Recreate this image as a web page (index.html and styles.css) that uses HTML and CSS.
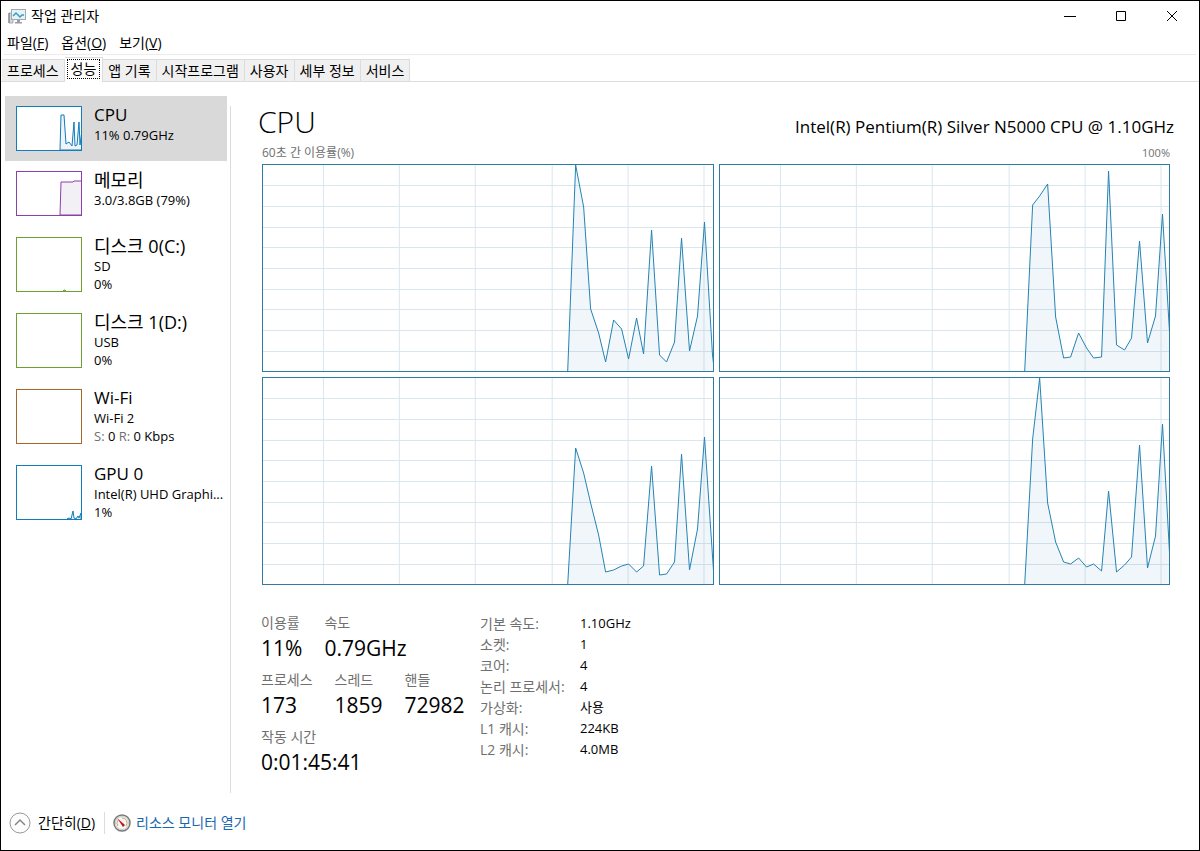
FILE: index.html
```html
<!DOCTYPE html>
<html lang="ko">
<head>
  <title>작업 관리자</title>
  <meta charset="utf-8">
  <meta name="viewport" content="width=device-width, initial-scale=1">
  <link rel="stylesheet" href="styles.css">
</head>
<body>
  <div class="window">
    <header class="titlebar">
      <svg class="app-icon" viewBox="0 0 18 16">
        <path d="M1 5h4v10H1z" fill="#d5d8da" stroke="#a9aeb1" />
        <path d="M1 5v10" stroke="#6c7276" />
        <rect x="3.500" y="1.500" width="14" height="10" fill="#e4f3fa" stroke="#a2a8ac" />
        <path d="M5 8l3-3 4 4 2-2h2" fill="none" stroke="#3d9ac4" stroke-width="1.500" />
        <path d="M9 12h3v2h2v1.500H7V14h2z" fill="#999fa3" />
      </svg>
      <h1 class="title">작업 관리자</h1>
      <div class="window-controls">
        <button class="control" aria-label="최소화"><svg viewBox="0 0 12 12"><path d="M0 6.500h12" /></svg></button>
        <button class="control" aria-label="최대화"><svg viewBox="0 0 12 12"><path d="M1.500 1.500h9v9h-9z" /></svg></button>
        <button class="control" aria-label="닫기"><svg viewBox="0 0 12 12"><path d="M1 1l10 10M11 1L1 11" /></svg></button>
      </div>
    </header>

    <nav class="menubar">
      <button class="menu">파일(<u>F</u>)</button>
      <button class="menu">옵션(<u>O</u>)</button>
      <button class="menu">보기(<u>V</u>)</button>
    </nav>

    <div class="tabs" role="tablist">
      <button class="tab" role="tab">프로세스</button>
      <button class="tab tab-active" role="tab" aria-selected="true"><span>성능</span></button>
      <button class="tab" role="tab">앱 기록</button>
      <button class="tab" role="tab">시작프로그램</button>
      <button class="tab" role="tab">사용자</button>
      <button class="tab" role="tab">세부 정보</button>
      <button class="tab" role="tab">서비스</button>
    </div>

    <div class="content">
      <aside class="sidebar">
        <button class="resource resource-active">
          <svg class="thumb thumb-short cpu" viewBox="0 0 64 43">
            <path class="area" d="M43 43L44 8h3l2 29 3-2 3 4 2-24 1 24 2-1 2-23 1 23 2-15 1-11v31z" />
          </svg>
          <span class="resource-text">
            <span class="resource-name" lang="en">CPU</span>
            <span class="resource-info">11% 0.79GHz</span>
          </span>
        </button>
        <button class="resource">
          <svg class="thumb thumb-short memory" viewBox="0 0 64 43">
            <path class="area" d="M43 43l1-33h12l1-1h8v34z" />
          </svg>
          <span class="resource-text">
            <span class="resource-name">메모리</span>
            <span class="resource-info">3.0/3.8GB (79%)</span>
          </span>
        </button>
        <button class="resource">
          <svg class="thumb disk" viewBox="0 0 64 53">
            <path class="area" d="M46 53l1-1h1l1 1z" />
          </svg>
          <span class="resource-text">
            <span class="resource-name">디스크 0(C:)</span>
            <span class="resource-info">SD</span>
            <span class="resource-info">0%</span>
          </span>
        </button>
        <button class="resource">
          <svg class="thumb disk" viewBox="0 0 64 53"></svg>
          <span class="resource-text">
            <span class="resource-name">디스크 1(D:)</span>
            <span class="resource-info">USB</span>
            <span class="resource-info">0%</span>
          </span>
        </button>
        <button class="resource">
          <svg class="thumb network" viewBox="0 0 64 53"></svg>
          <span class="resource-text">
            <span class="resource-name" lang="en">Wi-Fi</span>
            <span class="resource-info">Wi-Fi 2</span>
            <span class="resource-info"><span class="muted">S:</span> 0 <span class="muted">R:</span> 0 Kbps</span>
          </span>
        </button>
        <button class="resource">
          <svg class="thumb gpu" viewBox="0 0 64 53">
            <path class="area" d="M50 53l2-1 2 1 2-8 1 7 2 1 2-3 1 2 2-5v8z" />
          </svg>
          <span class="resource-text">
            <span class="resource-name" lang="en">GPU 0</span>
            <span class="resource-info">Intel(R) UHD Graphi...</span>
            <span class="resource-info">1%</span>
          </span>
        </button>
      </aside>

      <main class="detail">
        <div class="detail-header">
          <h2 class="detail-title">CPU</h2>
          <span class="detail-model">Intel(R) Pentium(R) Silver N5000 CPU @ 1.10GHz</span>
        </div>

        <div class="chart-labels">
          <span>60초 간 이용률(%)</span>
          <span class="chart-max">100%</span>
        </div>

        <div class="charts">
          <svg class="chart" viewBox="0 0 450 206" preserveAspectRatio="none">
            <path id="grid" class="grid" d="M60.500 0v206M136.500 0v206M212.500 0v206M289.500 0v206M365.500 0v206M441.500 0v206M0 20.500h450M0 41.500h450M0 62.500h450M0 82.500h450M0 103.500h450M0 124.500h450M0 144.500h450M0 165.500h450M0 186.500h450" />
            <polygon class="area" points="305,207 313,0 321,42 328,144 336,168 343,197 351,155 359,164 366,194 374,153 381,189 389,65 397,190 404,197 412,177 419,73 427,186 435,151 442,57 450,190 452,207" />
          </svg>
          <svg class="chart" viewBox="0 0 450 206" preserveAspectRatio="none">
            <use href="#grid" />
            <polygon class="area" points="305,207 313,40 320,31 328,19 336,152 344,193 351,192 359,168 367,183 374,193 382,192 389,6 397,180 405,185 412,173 420,76 428,178 436,151 443,49 450,167 452,207" />
          </svg>
          <svg class="chart" viewBox="0 0 450 206" preserveAspectRatio="none">
            <use href="#grid" />
            <polygon class="area" points="305,207 313,70 321,95 328,125 336,157 343,194 351,192 359,188 366,186 374,194 381,188 389,88 397,197 404,196 412,184 419,76 427,192 435,151 442,59 450,178 452,207" />
          </svg>
          <svg class="chart" viewBox="0 0 450 206" preserveAspectRatio="none">
            <use href="#grid" />
            <polygon class="area" points="305,207 313,61 320,0 328,125 336,164 344,184 351,186 359,180 367,189 374,186 382,193 389,113 397,194 405,187 412,179 420,67 428,190 436,158 443,46 450,175 452,207" />
          </svg>
        </div>

        <div class="stats">
          <div class="stats-live">
            <dl class="stat-row">
              <div><dt>이용률</dt><dd>11%</dd></div>
              <div><dt>속도</dt><dd>0.79GHz</dd></div>
            </dl>
            <dl class="stat-row">
              <div><dt>프로세스</dt><dd>173</dd></div>
              <div><dt>스레드</dt><dd>1859</dd></div>
              <div><dt>핸들</dt><dd>72982</dd></div>
            </dl>
            <dl class="stat-row">
              <div><dt>작동 시간</dt><dd>0:01:45:41</dd></div>
            </dl>
          </div>
          <table class="specs">
            <tr><th scope="row">기본 속도:</th><td>1.10GHz</td></tr>
            <tr><th scope="row">소켓:</th><td>1</td></tr>
            <tr><th scope="row">코어:</th><td>4</td></tr>
            <tr><th scope="row">논리 프로세서:</th><td>4</td></tr>
            <tr><th scope="row">가상화:</th><td>사용</td></tr>
            <tr><th scope="row">L1 캐시:</th><td>224KB</td></tr>
            <tr><th scope="row">L2 캐시:</th><td>4.0MB</td></tr>
          </table>
        </div>
      </main>
    </div>

    <footer class="footer">
      <button class="fewer-btn">
        <svg class="chevron" viewBox="0 0 22 22">
          <circle cx="11" cy="11" r="10" fill="#fdfdfd" stroke="#999" />
          <path d="M6 13l5-5 5 5" fill="none" stroke="#888" stroke-width="1.500" />
        </svg>
        <span>간단히(<u>D</u>)</span>
      </button>
      <a class="monitor-link" href="#">
        <svg class="gauge" viewBox="0 0 18 18">
          <circle cx="9" cy="9" r="8" fill="#f7f7f5" stroke="#77797a" stroke-width="1.500" />
          <circle cx="9" cy="9" r="6.500" fill="none" stroke="#c9c9c5" />
          <path d="M5 12a5 5 0 0 1 0-6M9 4a5 5 0 0 1 4 8" fill="none" stroke="#c9a87c" />
          <path d="M4 4l8 7-2 2z" fill="#c01818" />
        </svg>
        <span>리소스 모니터 열기</span>
      </a>
    </footer>
  </div>
</body>
</html>
```
FILE: styles.css
```css
* {
  box-sizing: border-box;
}

body {
  margin: 0;
  font-family: "Open Sans", "Noto Sans CJK KR", sans-serif;
  font-size: 14px;
  line-height: 18px;
  color: #000;
  background-color: #fff;
}

button {
  padding: 0;
  border: none;
  background: none;
  font: inherit;
  color: inherit;
}

svg {
  display: block;
}

.window {
  display: flex;
  flex-direction: column;
  min-height: 100vh;
  border: 1px solid #000;
}

/* Title bar */
.titlebar {
  display: flex;
  align-items: center;
  height: 30px;
  padding: 0 2px 0 7px;
}

.app-icon {
  width: 18px;
  height: 16px;
  margin-right: 5px;
}

.title {
  margin: 0;
  font-size: 14px;
  font-weight: 400;
}

.window-controls {
  display: flex;
  margin-left: auto;
}

.control {
  display: flex;
  align-items: center;
  justify-content: center;
  width: 51px;
  height: 30px;
}

.control svg {
  width: 12px;
  height: 12px;
  fill: none;
  stroke: #000;
}

/* Menu and tabs */
.menubar {
  display: flex;
  gap: 13px;
  height: 24px;
  margin: 0 3px;
  padding-left: 3px;
  border-bottom: 1px solid #ececec;
}

.tabs {
  display: flex;
  align-items: flex-end;
  height: 27px;
  padding-left: 1px;
  border-bottom: 1px solid #dcdcdc;
}

.tab {
  height: 22px;
  padding: 0 5px;
  border: 1px solid #dcdcdc;
  border-bottom: none;
  border-left: none;
  background-color: #f0f0f0;
}

.tab-active {
  height: 25px;
  margin-bottom: -1px;
  padding: 0 2px 2px;
  background-color: #fff;
}

.tab-active span {
  display: block;
  padding: 0 3px;
  border: 1px dotted #000;
}

/* Resource list */
.content {
  display: flex;
  flex: 1;
  padding-top: 14px;
}

.sidebar {
  display: flex;
  flex-direction: column;
  width: 222px;
  margin-left: 4px;
}

.resource {
  display: flex;
  gap: 12px;
  padding: 10px 0 11px 11px;
  text-align: left;
}

.resource-active {
  padding-bottom: 10px;
  background-color: #d9d9d9;
}

.thumb {
  flex: none;
  width: 66px;
  height: 55px;
  border: 1px solid;
  background-color: #fff;
}

.thumb-short {
  height: 45px;
}

.cpu,
.gpu {
  color: #117dbb;
}

.memory {
  color: #8b3fa8;
}

.disk {
  color: #6fa02f;
}

.network {
  color: #a8672a;
}

.thumb .area {
  fill: #f1f3f8;
  stroke: currentColor;
}

.memory .area {
  fill: #f3f0f5;
}

.resource-text {
  display: flex;
  flex-direction: column;
  height: 45px;
}

.resource-name {
  margin-bottom: 2px;
  font-size: 18px;
  line-height: 18px;
}

.resource-name:lang(en) {
  font-size: 17px;
}

.resource-info {
  font-size: 13px;
  line-height: 18px;
  white-space: nowrap;
}

.muted {
  color: #707070;
}

/* Detail pane */
.detail {
  flex: 1;
  min-width: 0;
  margin: 10px 0 3px 3px;
  padding: 0 29px 0 31px;
  border-left: 1px solid #dcdcdc;
}

.detail-header {
  display: flex;
  align-items: baseline;
  justify-content: space-between;
  margin: 0 -4px;
}

.detail-title {
  margin: 0;
  font-size: 30px;
  font-weight: 300;
  line-height: 32px;
}

.detail-model {
  font-size: 17px;
}

.chart-labels {
  display: flex;
  justify-content: space-between;
  padding: 6px 0 2px;
  font-size: 12px;
  color: #707070;
}

.chart-max {
  font-size: 11px;
}

.charts {
  display: grid;
  grid-template-columns: 1fr 1fr;
  gap: 5px;
}

.chart {
  width: 100%;
  height: 208px;
  border: 1px solid #2f7ca3;
}

.grid {
  fill: none;
  stroke: #d9e6ee;
  shape-rendering: crispEdges;
}

.chart .area {
  fill: rgba(17, 105, 170, 0.06);
  stroke: #2583b3;
  vector-effect: non-scaling-stroke;
}

.stats {
  display: flex;
  padding-top: 28px;
}

.stats-live {
  width: 218px;
}

.stat-row {
  display: flex;
  gap: 22px;
  margin: 0 0 7px -1px;
}

.stat-row dt {
  line-height: 20px;
  color: #707070;
}

.stat-row dd {
  margin: 0;
  font-size: 21px;
  line-height: 30px;
}

.specs {
  align-self: flex-start;
  border-collapse: collapse;
}

.specs th,
.specs td {
  padding: 0;
  line-height: 21px;
  text-align: left;
}

.specs th {
  width: 100px;
  font-weight: 400;
  color: #707070;
}

.specs td {
  font-size: 13px;
}

/* Footer */
.footer {
  display: flex;
  align-items: center;
  height: 54px;
  padding-left: 8px;
}

.fewer-btn {
  display: flex;
  align-items: center;
  gap: 7px;
  padding-right: 9px;
  border-right: 1px solid #dcdcdc;
  line-height: 16px;
}

.chevron {
  width: 22px;
  height: 22px;
}

.monitor-link {
  display: flex;
  align-items: center;
  gap: 5px;
  margin-left: 8px;
  color: #1a66ad;
  text-decoration: none;
}

.gauge {
  width: 18px;
  height: 18px;
}
```
